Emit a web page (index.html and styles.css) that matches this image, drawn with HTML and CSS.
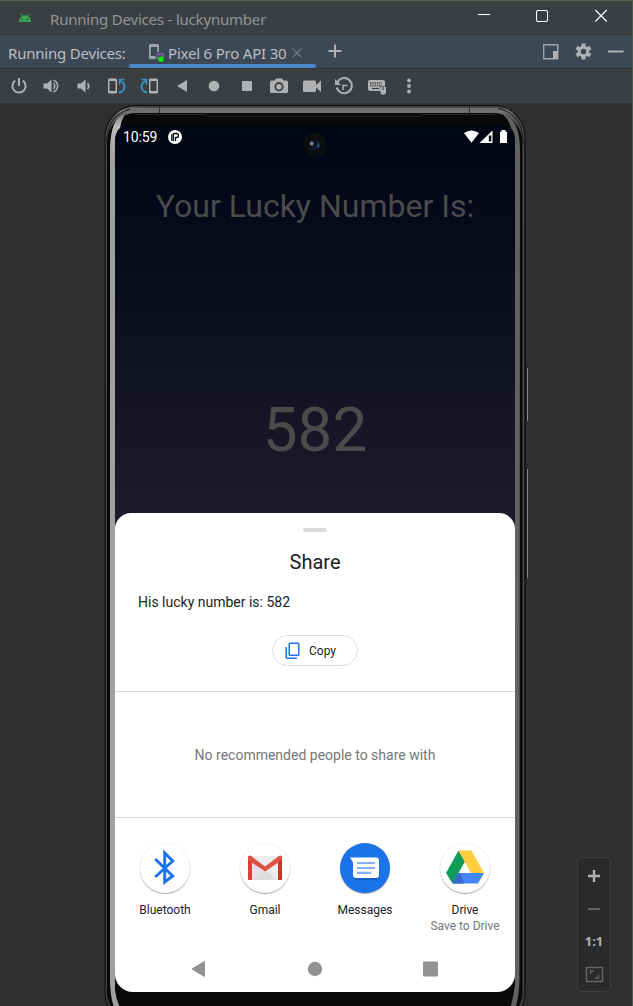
FILE: index.html
```html
<!DOCTYPE html>
<html lang="en">
<head>
<meta charset="utf-8">
<title>Running Devices - luckynumber</title>
<link rel="stylesheet" href="styles.css">
</head>
<body>
<div class="window">
  <header class="titlebar">
    <svg class="android" width="14" height="10" viewBox="0 0 14 10"><path d="M1 9Q1 5 4 3L2.4.7l.6-.4L4.7 2.6Q7 1.8 9.300 2.600L11 .3l.6.4L10 3Q13 5 13 9Z" fill="#35a853"/><circle cx="4.300" cy="6.300" r=".8" fill="#3c3f41"/><circle cx="9.700" cy="6.300" r=".8" fill="#3c3f41"/></svg>
    <span class="title">Running Devices - luckynumber</span>
    <svg class="controls" width="140" height="20" viewBox="0 0 140 20" fill="none" stroke="#fff" stroke-width="1.100"><path d="M6 8.500h12"/><rect x="64.500" y="4.500" width="11" height="11" rx="1.500"/><path d="M123.300 4l11.500 11.500M134.800 4L123.300 15.500"/></svg>
  </header>
  <nav class="tabs">
    <span class="tabs-label">Running Devices:</span>
    <div class="tab">
      <svg width="18" height="20" viewBox="0 0 18 20"><path d="M1 2.500Q1 1 2.500 1H9.500Q11 1 11 2.500V9H9.200V4H2.800V13H7.500V16H2.500Q1 16 1 14.500Z" fill="#9da5ae"/><path d="M9.500 16v-5H15v5" fill="none" stroke="#8065a5" stroke-width="1.600"/><path d="M8 16h5" stroke="#8065a5"/><circle cx="13" cy="16.300" r="2.700" fill="#00f000"/></svg>
      <span class="tab-name">Pixel 6 Pro API 30</span>
      <svg width="10" height="10" viewBox="0 0 10 10" stroke="#737d88" stroke-width="1.100"><path d="M.5.5l9 9M9.500.5l-9 9"/></svg>
    </div>
    <svg class="add" width="14" height="14" viewBox="0 0 14 14" stroke="#afb1b3" stroke-width="2"><path d="M7 .5v13M.5 7h13"/></svg>
    <svg class="tab-tools" width="84" height="20" viewBox="0 0 84 20"><path d="M2.700 3.700h14v14h-14z" fill="none" stroke="#9ea5ad" stroke-width="1.400"/><path d="M12 10h5v8h-5z" fill="#afb1b3"/><g transform="translate(42.500 10.500)"><g fill="#afb1b3"><circle r="5.700"/><g id="teeth"><rect x="-2" y="-8" width="4" height="16"/><rect x="-2" y="-8" width="4" height="16" transform="rotate(60)"/><rect x="-2" y="-8" width="4" height="16" transform="rotate(120)"/></g></g><circle r="2.700" fill="#3d4856"/></g><path d="M67 10.500h15.500" stroke="#afb1b3" stroke-width="2"/></svg>
  </nav>
  <div class="toolbar">
    <svg viewBox="0 0 20 20"><path d="M6.200 4.600A6.600 6.600 0 1 0 13.800 4.600" fill="none" stroke="#afb1b3" stroke-width="2"/><path d="M10 2v8" stroke="#afb1b3" stroke-width="2"/></svg>
    <svg viewBox="0 0 20 20"><path d="M1.500 7.500H5L9.500 3.500v13L5 12.500H1.500z" fill="#afb1b3"/><path d="M11.500 7Q14 10 11.500 13M11.500 4.300A6 6 0 0 1 11.500 15.700" fill="none" stroke="#afb1b3" stroke-width="1.500"/></svg>
    <svg viewBox="0 0 20 20"><path d="M3.500 7.500H7L11.500 3.500v13L7 12.500H3.500z" fill="#afb1b3"/><path d="M13.500 7Q16 10 13.500 13" fill="none" stroke="#afb1b3" stroke-width="1.800"/></svg>
    <svg viewBox="0 0 20 20"><path fill-rule="evenodd" d="M1 4Q1 2.500 2.500 2.500H8.500Q10 2.500 10 4V16Q10 17.500 8.500 17.500H2.500Q1 17.500 1 16ZM2.500 5v10h6V5z" fill="#afb1b3"/><path d="M12 3.500h5.500M12.500 3v5.500" stroke="#3592c4" stroke-width="1.500"/><path d="M13 4.500Q17.500 7 17.500 10.500Q17.500 15 12 16.500" fill="none" stroke="#3592c4" stroke-width="2"/></svg>
    <svg viewBox="0 0 20 20"><g transform="translate(20 0) scale(-1 1)"><path fill-rule="evenodd" d="M1 4Q1 2.500 2.500 2.500H8.500Q10 2.500 10 4V16Q10 17.500 8.500 17.500H2.500Q1 17.500 1 16ZM2.500 5v10h6V5z" fill="#afb1b3"/><path d="M12 3.500h5.500M12.500 3v5.500" stroke="#3592c4" stroke-width="1.500"/><path d="M13 4.500Q17.500 7 17.500 10.500Q17.500 15 12 16.500" fill="none" stroke="#3592c4" stroke-width="2"/></g></svg>
    <svg viewBox="0 0 20 20"><path d="M5 10l10-6v12z" fill="#afb1b3"/></svg>
    <svg viewBox="0 0 20 20"><circle cx="10" cy="10" r="5.300" fill="#afb1b3"/></svg>
    <svg viewBox="0 0 20 20"><rect x="5" y="5" width="10" height="10" rx="1" fill="#afb1b3"/></svg>
    <svg viewBox="0 0 20 20"><path d="M1 6Q1 4.500 2.500 4.500H5.500L7 2.500h6l1.500 2h3Q19 4.500 19 6V15.500Q19 17 17.500 17h-15Q1 17 1 15.500Z" fill="#afb1b3"/><circle cx="10" cy="10.700" r="3.700" fill="none" stroke="#3c3f41" stroke-width="1.800"/></svg>
    <svg viewBox="0 0 20 20"><rect x="1" y="4.500" width="13" height="11.500" rx="1.500" fill="#afb1b3"/><path d="M14 9l5-4.500v11.500l-5-4.500z" fill="#afb1b3"/></svg>
    <svg viewBox="0 0 20 20" fill="none" stroke="#afb1b3" stroke-width="2"><path d="M3.500 6A7.600 7.600 0 1 1 2.800 11.500"/><path d="M1 3v6h6z" fill="#afb1b3" stroke="none"/><path d="M9 14V9.500h4.500" stroke-width="1.500"/></svg>
    <svg viewBox="0 0 20 20"><rect x="1" y="4" width="17" height="11" rx="2" fill="#afb1b3"/><path d="M3 7h12M3 9.500h12" stroke="#3c3f41" stroke-width="1.300" stroke-dasharray="1.300 1"/><path d="M5 12.500h7" stroke="#3c3f41" stroke-width="1.200"/><path d="M12.500 10.500H20V20h-4z" fill="#3c3f41"/><path d="M13.500 11h2.200v3h1V11h2.300v5a2.750 2.750 0 0 1-5.500 0z" fill="#afb1b3"/></svg>
    <svg viewBox="0 0 20 20" fill="#afb1b3"><circle cx="10" cy="4.500" r="1.900"/><circle cx="10" cy="10" r="1.900"/><circle cx="10" cy="15.500" r="1.900"/></svg>
  </div>
  <main class="canvas">
    <div class="phone">
      <svg class="frame" width="424" height="902" viewBox="104 104 424 902">
        <defs>
          <linearGradient id="metal" x1="0" y1="105" x2="0" y2="1025" gradientUnits="userSpaceOnUse"><stop offset="0" stop-color="#3b3b3b"/><stop offset=".007" stop-color="#777"/><stop offset=".012" stop-color="#555"/><stop offset=".04" stop-color="#444"/><stop offset="1" stop-color="#3c3c3c"/></linearGradient>
          <linearGradient id="rimL" x1="0" y1="112" x2="0" y2="160" gradientUnits="userSpaceOnUse"><stop offset="0" stop-color="#777"/><stop offset=".3" stop-color="#bbb"/><stop offset="1" stop-color="#a0a0a0"/></linearGradient>
        </defs>
        <rect x="104.500" y="105" width="421" height="920" rx="32" fill="#0c0c0c"/>
        <rect x="105.500" y="106" width="419" height="918" rx="31" fill="url(#metal)"/>
        <path d="M107 143C107 122 116 110 140 107.500H492C514 110 523 122 523 143" fill="none" stroke="#1b1b1b"/>
        <path d="M130 109.500H498" stroke="#6e6e6e" stroke-width="4"/>
        <path d="M159.500 106v8M469.500 106v8" stroke="#333"/>
        <rect x="107" y="113" width="415.500" height="908" rx="29" fill="#090909"/>
        <path d="M135 114.500H205l3 2H420l3-2H495" fill="none" stroke="#252525"/>
        <path d="M110 148Q111 117 125 114Q121 121 120 128Q115 131 115 145V990Q116 1000 122 1012H116Q110 1000 110 980Z" fill="url(#rimL)"/>
        <path d="M520 148Q519 117 502 114Q509 119 511 128Q515 131 515 145V985Q513 1000 509 1012H514Q519 1000 519.500 980Z" fill="#626262"/>
        <path d="M523.500 145V990" stroke="#4c4c4c"/><path d="M525 140V990" stroke="#111"/>
        <path d="M526.500 367v54M526.500 468v110" stroke="#171717" stroke-width="2"/><path d="M527.500 368v53M527.500 469v109" stroke="#898989"/>
      </svg>
      <div class="screen">
        <div class="status">
          <span class="clock">10:59</span>
          <svg class="notice" width="14" height="14" viewBox="0 0 14 14"><circle cx="7" cy="7" r="7" fill="#fff"/><path d="M5.300 11V4.600Q5.300 3.500 6.400 3.500H8.500Q10.500 3.500 10.500 5.500T8.500 7.500H7.500V11" fill="none" stroke="#020714" stroke-width="1.300"/><path d="M3.800 4v7" stroke="#020714" stroke-width="1.200"/></svg>
          <svg class="signals" width="44" height="14" viewBox="0 0 44 14" fill="#fff"><path d="M0 3Q7.500-2 15 3L7.500 12.700z"/><path d="M15.500 13L28.500.5V13z"/><path d="M24.800 5.500h2.500v6h-2.500z" fill="#06101b"/><path d="M37.500 0h4v1.800H43V13h-7V1.800h1.500z"/></svg>
        </div>
        <svg class="camera" width="24" height="24" viewBox="0 0 24 24"><circle cx="12" cy="12" r="12" fill="#0d0e10"/><circle cx="12" cy="12" r="5.800" fill="#11162b"/><circle cx="8.700" cy="10.500" r="2" fill="#78848b"/><circle cx="15.300" cy="13" r="1.600" fill="#1d4e8a"/><circle cx="15.500" cy="11" r=".6" fill="#8d96bd"/></svg>
        <h1 class="heading">Your Lucky Number Is:</h1>
        <div class="number">582</div>
        <section class="sheet">
          <i class="handle"></i>
          <h2 class="sheet-title">Share</h2>
          <p class="message">His lucky number is: 582</p>
          <div class="copy">
            <svg width="16" height="18" viewBox="0 0 16 18" fill="none" stroke="#1a73e8" stroke-width="1.500"><rect x="4.200" y="1.200" width="9.600" height="12" rx=".8"/><path d="M1.200 5V15.300Q1.200 16.200 2 16.200H12"/></svg>
            <span>Copy</span>
          </div>
          <div class="people">No recommended people to share with</div>
          <div class="apps">
            <div class="app"><svg class="app-icon" viewBox="0 0 50 50"><path d="M15.500 16L33 33L25 39V10L33 18L15.500 34" fill="none" stroke="#1a73e8" stroke-width="2.900" transform="translate(-.3 0)"/></svg><span>Bluetooth</span></div>
            <div class="app"><svg class="app-icon" viewBox="0 0 50 50"><path d="M8 13h34v24H8z" fill="#ececec"/><path d="M12 37L25 26.500L37 37z" fill="#ddd"/><path d="M12 18v19L22 29z" fill="#e2e2e2"/><path d="M8 14Q8 12.500 10 12.500L12 14V37H9Q8 37 8 36Z" fill="#d94336"/><path d="M42 14Q42 12.500 40 12.500L38 14V37H41Q42 37 42 36Z" fill="#c5372b"/><path d="M8 14Q9 12 11 13L25 23.500L39 13Q41 12 42 14V17L25 28.500L8 17Z" fill="#e05145"/></svg><span>Gmail</span></div>
            <div class="app"><svg class="app-icon blue" viewBox="0 0 50 50"><path d="M10 16H36Q39 16 39 19V34Q39 37 36 37H16Q13 37 13 34V20Z" fill="#1258b5" opacity=".7"/><path d="M10 14.500H36Q39 14.500 39 17.500V32Q39 35 36 35H16Q13 35 13 32V19.500Z" fill="#fff"/><path d="M17 20h18M17 25h18M17 29.800h14" stroke="#83b0f5" stroke-width="2.200"/></svg><span>Messages</span></div>
            <div class="app"><svg class="app-icon" viewBox="0 0 50 50"><path d="M18.500 7.500L6 30L12.500 40.500L25 18.500Z" fill="#0f9d58"/><path d="M18.500 7.500H31.500L44 30H31Z" fill="#ffcd40"/><path d="M18 30H44L38 40.500H12.500Z" fill="#4285f4"/><path d="M18 30h2l4 10.500H12.500Z" fill="#3469d0"/></svg><span>Drive</span><small>Save to Drive</small></div>
          </div>
          <svg class="navigation" width="400" height="20" viewBox="0 0 400 20" fill="#929292"><path d="M77 10L89.500 2.500v15z" stroke="#929292"/><circle cx="200" cy="10" r="7.200"/><rect x="308" y="2.500" width="15" height="15" rx="1"/></svg>
        </section>
      </div>
    </div>
    <div class="zoom">
      <svg width="34" height="133" viewBox="0 0 34 133"><path d="M17 12v12M11 18h12" stroke="#afb1b3" stroke-width="2.400"/><path d="M11 51h12" stroke="#626466" stroke-width="2"/><path d="M9.500 109.500h16v14h-16z" fill="none" stroke="#626466" stroke-width="1.500"/><path d="M13.500 116v-3H17M21.500 117v3H18" fill="none" stroke="#626466" stroke-width="1.300"/></svg>
      <span>1:1</span>
    </div>
  </main>
</div>
</body>
</html>
```
FILE: styles.css
```css
* { box-sizing: border-box; }
body { margin: 0; background: #2d2f31; font-family: Roboto, sans-serif; }
svg { display: block; flex: none; }
.window { width: 633px; height: 1006px; overflow: hidden; display: flex; flex-direction: column; border-top: 1px solid #52614f; border-right: 1px solid #4b5650; }
.titlebar { height: 34px; flex: none; display: flex; align-items: center; padding-left: 18px; background: #3c3f41; border-bottom: 1px solid #323334; font-family: "Noto Sans", sans-serif; }
.title { margin-left: 18px; font-size: 15px; letter-spacing: -.2px; color: #929496; white-space: nowrap; padding-top: 2px; }
.controls { margin: 0 20px 3px auto; }
.tabs { height: 34px; flex: none; display: flex; align-items: center; background: #3d4856; border-bottom: 1px solid #323334; font-family: "Noto Sans", sans-serif; font-size: 15px; color: #bbbdbf; white-space: nowrap; }
.tabs-label { width: 129px; padding-left: 8px; letter-spacing: -.2px; padding-top: 2px; }
.tab { width: 187px; height: 33px; display: flex; align-items: center; padding-left: 19px; padding-top: 2px; position: relative; }
.tab::after { content: ""; position: absolute; left: 0; right: 0; bottom: 0; height: 4px; border-radius: 2px; background: #4a88c7; }
.tab-name { width: 115px; margin: 0 9px 0 2px; letter-spacing: -.2px; }
.add { margin-left: 12px; margin-bottom: 1px; }
.tab-tools { margin: 0 7px 1px auto; }
.toolbar { height: 35px; flex: none; display: flex; align-items: center; gap: 12.5px; padding-left: 9px; background: #3c3f41; border-bottom: 1px solid #323334; }
.toolbar svg { width: 20px; height: 20px; }
.canvas { flex: 1; min-height: 0; position: relative; padding-left: 104px; background: #2d2f31; }
.phone { width: 424px; height: 902px; position: relative; padding: 21px 13px 0 11px; }
.frame { position: absolute; left: 0; top: 0; }
.screen { position: relative; width: 400px; height: 867px; overflow: hidden; border-radius: 15px 15px 18px 18px; background: linear-gradient(#010615 0, #080b1c 130px, #1d1b2b 390px); display: flex; flex-direction: column; }
.status { height: 24px; display: flex; align-items: center; padding: 0 7px 0 8px; color: #fff; font-size: 14px; }
.clock { width: 45px; letter-spacing: -.1px; }
.signals { margin-left: auto; }
.camera { position: absolute; left: 188px; top: 8px; }
.heading { margin: 37px 0 0; height: 40px; line-height: 40px; font-size: 32px; font-weight: 400; text-align: center; color: #4b4b4b; white-space: nowrap; }
.number { height: 72px; line-height: 72px; margin-top: 168px; font-size: 62px; text-align: center; color: #4b4b4b; }
.sheet { margin-top: 47px; flex: 1; background: #fff; border-radius: 16px 16px 0 0; display: flex; flex-direction: column; align-items: center; color: #202124; }
.handle { width: 24px; height: 4px; margin-top: 15px; border-radius: 2px; background: #dadada; flex: none; }
.sheet-title { margin: 18px 0 0; font-weight: 400; font-size: 20px; line-height: 24px; }
.message { margin: 19px 0 0 23px; align-self: flex-start; font-size: 14px; line-height: 18px; }
.copy { width: 86px; height: 31px; margin-top: 24px; border: 1px solid #dadce0; border-radius: 16px; display: flex; align-items: center; padding-left: 12px; gap: 8px; font-size: 12px; flex: none; }
.people { width: 400px; height: 127px; margin-top: 25px; border: solid #dadada; border-width: 1px 0; display: flex; align-items: center; justify-content: center; color: #747678; font-size: 14px; flex: none; }
.apps { display: grid; grid-template-columns: repeat(4, 100px); padding-top: 25px; height: 141px; flex: none; }
.app { display: flex; flex-direction: column; align-items: center; font-size: 12px; line-height: 16px; }
.app-icon { width: 50px; height: 50px; border-radius: 50%; background: #fff; box-shadow: 0 1px 1px #aaa, 0 0 1px #ddd; margin-bottom: 9px; }
.blue { background: #1a73e8; }
.app small { font-size: 12px; color: #747678; white-space: nowrap; }
.zoom { position: absolute; left: 577px; top: 753px; width: 34px; height: 135px; border: 1px solid #3c3e40; border-radius: 5px; background: #292a2b; }
.zoom svg { margin-left: -1px; }
.zoom span { position: absolute; left: 0; right: 0; top: 73px; text-align: center; font: bold 13px/20px "Open Sans", sans-serif; color: #afb1b3; }
```
